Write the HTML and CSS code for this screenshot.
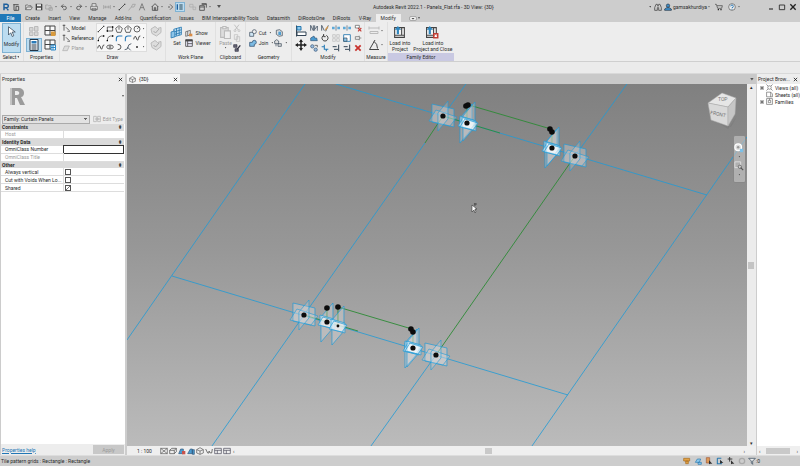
FILE: index.html
```html
<!DOCTYPE html>
<html lang="en">
<head>
  <meta charset="UTF-8" />
  <meta name="viewport" content="width=device-width, initial-scale=1.0" />
  <title>Autodesk Revit 2022.1 - Panels_Flat.rfa</title>
  <link rel="stylesheet" href="styles.css">
</head>
<body>
  <!-- icon sprite -->
  <svg class="sprite" aria-hidden="true">
    <symbol id="i-logo" viewBox="0 0 12 12"><path d="M3 11V2h4a2.2 2.2 0 0 1 0 5H3M6.500 7l3 4" fill="none" stroke="#1e5f9c" stroke-width="2.2"/></symbol>
    <symbol id="i-doc" viewBox="0 0 12 12"><path d="M2 2.500h8M3 2v9h3V5h4v6H6" fill="none" stroke="#444" stroke-width="1.3"/></symbol>
    <symbol id="i-open" viewBox="0 0 12 12"><path d="M1 10V3h3l1 1h4v2M1 10l2-4h8l-2 4z" fill="#ddd" stroke="#555"/></symbol>
    <symbol id="i-save" viewBox="0 0 12 12"><path d="M1 1h9l1 1v9H1z" fill="#444"/><path d="M3 2h6v3H3zM3 7h6v3H3z" fill="#eee"/></symbol>
    <symbol id="i-sync" viewBox="0 0 12 12"><path d="M1 9V3h3l1 1h4v5z M6 7h5v4H6z" fill="#ccc" stroke="#999"/></symbol>
    <symbol id="i-undo" viewBox="0 0 12 12"><path d="M5 2L2 5l3 3M2 5h5a2.5 2.5 0 0 1 0 5H5" fill="none" stroke="#555" stroke-width="1.3"/></symbol>
    <symbol id="i-redo" viewBox="0 0 12 12"><path d="M7 2l3 3-3 3M10 5H5a2.5 2.5 0 0 0 0 5h2" fill="none" stroke="#555" stroke-width="1.3"/></symbol>
    <symbol id="i-print" viewBox="0 0 12 12"><path d="M3 5V1h6v4M1 5h10v5H1zM3 8h6v3H3z" fill="#e4e4e4" stroke="#555"/></symbol>
    <symbol id="i-dim" viewBox="0 0 12 12"><path d="M1 3v6M11 3v6M1 6h10M4 4v4M8 4v4" fill="none" stroke="#999"/></symbol>
    <symbol id="i-line" viewBox="0 0 12 12"><path d="M2 10l8-8" stroke="#444" stroke-width="1.3"/><path d="M1 9h2v2H1zM9 1h2v2H9z" fill="#444"/></symbol>
    <symbol id="i-tag" viewBox="0 0 12 12"><path d="M1 11l4-5M5 6l2-4h4L9 6z" fill="none" stroke="#999"/></symbol>
    <symbol id="i-a" viewBox="0 0 12 12"><path d="M2 11L6 1l4 10M4 7h4" fill="none" stroke="#777" stroke-width="1.4"/></symbol>
    <symbol id="i-home" viewBox="0 0 12 12"><path d="M1 6l5-5 5 5M2 5v6h8V5M5 11V7h2v4" fill="none" stroke="#444" stroke-width="1.2"/></symbol>
    <symbol id="i-section" viewBox="0 0 12 12"><path d="M3 6h3M6 2l4 4-4 4" fill="none" stroke="#555" stroke-width="1.3"/></symbol>
    <symbol id="i-thin" viewBox="0 0 12 12"><path d="M2 2v8" stroke="#1e5f9c" stroke-width="2"/><path d="M5 3h5M5 6h5M5 9h5" stroke="#245" stroke-width="1.5"/></symbol>
    <symbol id="i-inactive" viewBox="0 0 12 12"><path d="M1 2h5v4H1zM6 6h4v4H6z" fill="none" stroke="#aaa"/></symbol>
    <symbol id="i-windows" viewBox="0 0 12 12"><path d="M4 1h7v6M1 4h7v7H1zM1 6h7M4 2h7" fill="none" stroke="#444" stroke-width="1.2"/></symbol>
    <symbol id="i-binoculars" viewBox="0 0 12 12"><path d="M3 2h2l1 3 1-3h2l2 5v4H7V7H5v4H1V7z" fill="none" stroke="#555" stroke-width="1.3"/></symbol>
    <symbol id="i-user" viewBox="0 0 12 12"><circle cx="6" cy="4" r="2.5" fill="#3f8fc9" stroke="#234"/><path d="M1 11V9l3-2h4l3 2v2z" fill="#3f8fc9" stroke="#234"/></symbol>
    <symbol id="i-cart" viewBox="0 0 12 12"><path d="M0 2h2l2 6h6l1-4H3" fill="none" stroke="#555" stroke-width="1.2"/><circle cx="5" cy="10" r="1"/><circle cx="9" cy="10" r="1"/></symbol>
    <symbol id="i-help" viewBox="0 0 12 12"><circle cx="6" cy="6" r="5" fill="#eee" stroke="#555"/><path d="M4 5a2 2 0 1 1 2 2V8M6 9v1" fill="none" stroke="#1e6fb0" stroke-width="1.3"/></symbol>
    <symbol id="i-close" viewBox="0 0 12 12"><path d="M2 2l8 8M10 2l-8 8" stroke="#222" stroke-width="2"/></symbol>
    <symbol id="i-min" viewBox="0 0 12 12"><path d="M3 9h6" stroke="#222" stroke-width="1.6"/></symbol>
    <symbol id="i-max" viewBox="0 0 12 12"><path d="M2 3h8v7H2z" fill="none" stroke="#333" stroke-width="1.4"/></symbol>

    <symbol id="i-cursor" viewBox="0 0 12 16"><path d="M2 1v11l3-3 2 5 2-1-2-5h4z" fill="#fff" stroke="#345"/></symbol>
    <symbol id="i-types" viewBox="0 0 24 24"><path d="M3 5h7v7H3zM13 3h7v9h-7zM3 14h7v7H3zM13 14h7v7h-7z" fill="#d6d6d6" stroke="#bbb" stroke-width="2"/></symbol>
    <symbol id="i-family" viewBox="0 0 24 24"><path d="M2 2h20v18H2zM2 11h20M12 2v18" fill="#fafafa" stroke="#444" stroke-width="2"/><path d="M14 13h9v9h-9z" fill="#d99a3c"/></symbol>
    <symbol id="i-props" viewBox="0 0 24 24"><path d="M4 1h16v22H4z" fill="#fff" stroke="#234" stroke-width="2"/><path d="M7 4h10v5H7z" fill="#2a7ab8"/><path d="M7 12h10M7 16h10M7 20h10" stroke="#234" stroke-width="2"/></symbol>
    <symbol id="i-famtypes" viewBox="0 0 24 24"><path d="M2 2h20v18H2zM2 11h20M12 2v18" fill="#fafafa" stroke="#444" stroke-width="2"/><path d="M14 12h9v10h-9zM14 17h9M18 12v10" fill="#fff" stroke="#2a88c8" stroke-width="2"/></symbol>
    <symbol id="i-model" viewBox="0 0 12 12"><path d="M3 1v9M1 2h4M6 5l5 5" fill="none" stroke="#444" stroke-width="1.2"/><path d="M8 11h4" stroke="#444"/></symbol>
    <symbol id="i-plane" viewBox="0 0 12 12"><path d="M1 10l3-7h7l-3 7z" fill="#ddd" stroke="#aaa"/></symbol>
    <symbol id="i-rect" viewBox="0 0 12 12"><path d="M2 3h8v6H2z" fill="none" stroke="#444" stroke-width="1.2"/><path d="M1 8h2v2H1zM9 2h2v2H9z"/></symbol>
    <symbol id="i-poly" viewBox="0 0 12 12"><path d="M6 1l5 4-2 6H3L1 5zM6 3v4" fill="none" stroke="#444" stroke-width="1.2"/></symbol>
    <symbol id="i-circ" viewBox="0 0 12 12"><circle cx="6" cy="6" r="4.5" fill="none" stroke="#444" stroke-width="1.2"/><path d="M6 6l3-3" stroke="#444"/></symbol>
    <symbol id="i-arc" viewBox="0 0 12 12"><path d="M2 10Q2 2 10 3" fill="none" stroke="#555" stroke-width="1.2"/><path d="M1 9h2v2H1zM9 2h2v2H9z"/></symbol>
    <symbol id="i-arcb" viewBox="0 0 12 12"><path d="M2 11V7q0-4 4-4h5" fill="none" stroke="#2a7ab8" stroke-width="1.6"/></symbol>
    <symbol id="i-spline" viewBox="0 0 12 12"><path d="M1 8q2-8 4-2t3 1 3-4" fill="none" stroke="#333" stroke-width="1.3"/></symbol>
    <symbol id="i-ellipse" viewBox="0 0 12 12"><ellipse cx="6" cy="6" rx="5" ry="3" fill="none" stroke="#444" stroke-width="1.2"/><path d="M6 3v6M4 6h4" stroke="#444"/></symbol>
    <symbol id="i-half" viewBox="0 0 12 12"><path d="M4 2q5 0 5 4t-5 4" fill="none" stroke="#444" stroke-width="1.3"/></symbol>
    <symbol id="i-pick" viewBox="0 0 12 12"><path d="M1 10q5 0 5-4t5-5M5 6l5 5" fill="none" stroke="#345" stroke-width="1.2"/></symbol>
    <symbol id="i-point" viewBox="0 0 12 12"><circle cx="6" cy="6" r="1.5" fill="#333"/></symbol>
    <symbol id="i-face" viewBox="0 0 24 24"><path d="M2 8l8-5 5 4 7-2v10l-9 7-9-5z" fill="#ddd" stroke="#bbb" stroke-width="2"/><path d="M7 12l4 4 7-8" fill="none" stroke="#aaa" stroke-width="2"/></symbol>
    <symbol id="i-set" viewBox="0 0 24 24"><path d="M7 6l14-4v14L7 20zM12 4v14M17 3v14M7 11l14-4M7 16l14-4" fill="#bfe0f4" stroke="#2678b0" stroke-width="1.5"/><path d="M2 11l7-2v11l-7 2z" fill="#8cc4e8" stroke="#2678b0" stroke-width="1.5"/></symbol>
    <symbol id="i-show" viewBox="0 0 12 12"><path d="M1 4l7-2v7l-7 2zM4 3v7" fill="#e0e0e0" stroke="#555"/><path d="M6 7h5v4H6z" fill="#d98b45"/></symbol>
    <symbol id="i-viewer" viewBox="0 0 12 12"><path d="M1 1h10v10H1zM1 3h10M4 3v8M4 7h7" fill="#eef" stroke="#444" stroke-width="1.2"/><path d="M1 1h10v2H1z" fill="#444"/></symbol>
    <symbol id="i-paste" viewBox="0 0 24 24"><path d="M3 3h14v18H3z" fill="#ddd" stroke="#bbb" stroke-width="2"/><path d="M7 1h6v4H7zM10 9h11v14H10z" fill="#eee" stroke="#bbb" stroke-width="2"/></symbol>
    <symbol id="i-cutclip" viewBox="0 0 12 12"><path d="M2 1l6 8M9 1L3 9" stroke="#bbb" stroke-width="1.3"/><circle cx="3" cy="10" r="1.5" fill="none" stroke="#bbb"/><circle cx="9" cy="10" r="1.5" fill="none" stroke="#bbb"/></symbol>
    <symbol id="i-copyclip" viewBox="0 0 12 12"><path d="M2 1h5v7H2zM5 4h5v7H5z" fill="#eee" stroke="#bbb"/></symbol>
    <symbol id="i-match" viewBox="0 0 12 12"><path d="M1 1h5v4H1zM3 7h5v4H3z" fill="#667" stroke="#334"/><path d="M6 8l5-6" stroke="#334" stroke-width="2"/></symbol>
    <symbol id="i-cutgeo" viewBox="0 0 12 12"><path d="M1 5h6v6H1z" fill="#cfe6f5" stroke="#345"/><circle cx="8" cy="4" r="3" fill="#eee" stroke="#345"/></symbol>
    <symbol id="i-joingeo" viewBox="0 0 12 12"><path d="M1 5h4a3 3 0 1 1 3 3v3H1z" fill="#7dbbe3" stroke="#246"/></symbol>
    <symbol id="i-cope" viewBox="0 0 12 12"><path d="M2 2l5-1 4 3v6l-5 1-4-3z" fill="#ddd" stroke="#345"/><path d="M5 4h4v5H5z" fill="#4f9fd2"/></symbol>
    <symbol id="i-split" viewBox="0 0 12 12"><path d="M1 3l3-2 3 2v4H1zM6 7h5v4H6zM3 7v4" fill="#ddd" stroke="#345"/></symbol>
    <symbol id="i-align" viewBox="0 0 24 24"><path d="M3 1v22" stroke="#345" stroke-width="2"/><path d="M4 3h8v7H4z" fill="#8cc8ec" stroke="#2678b0" stroke-width="2"/><path d="M4 14h18v7H4z" fill="#fff" stroke="#345" stroke-width="2"/></symbol>
    <symbol id="i-move" viewBox="0 0 24 24"><path d="M12 3v18M3 12h18" stroke="#222" stroke-width="3"/><path d="M12 0l4 6H8zM12 24l4-6H8zM0 12l6-4v8zM24 12l-6-4v8z" fill="#222"/></symbol>
    <symbol id="i-mirror" viewBox="0 0 12 12"><path d="M1 10V2l4 8V2M7 10V2M11 10V3L7 8" fill="none" stroke="#456" stroke-width="1.3"/></symbol>
    <symbol id="i-mirrord" viewBox="0 0 12 12"><path d="M1 10V2l4 8M7 11l4-9" fill="none" stroke="#456" stroke-width="1.3"/><path d="M6 8l4-5 1 2-4 5z" fill="#d0964c"/></symbol>
    <symbol id="i-splitel" viewBox="0 0 12 12"><path d="M0 4h4v4H0zM8 4h4v4H8z" fill="#5da9d8"/><path d="M6 2v8" stroke="#456"/></symbol>
    <symbol id="i-unpin" viewBox="0 0 12 12"><path d="M2 2h6v4H2z" fill="#fff" stroke="#555"/><path d="M6 6l5 5M11 6l-5 5" stroke="#c33b35" stroke-width="1.6"/></symbol>
    <symbol id="i-offset" viewBox="0 0 12 12"><path d="M1 10V6l5-3 1 3h3l1 4z" fill="#4a9bd0" stroke="#357"/></symbol>
    <symbol id="i-rotate" viewBox="0 0 12 12"><path d="M8 2a4.5 4.5 0 1 1-4 0M4 0v4h3" fill="none" stroke="#333" stroke-width="1.4"/></symbol>
    <symbol id="i-array" viewBox="0 0 12 12"><path d="M1 1h4v4H1zM7 1h4v4H7zM1 7h4v4H1zM7 7h4v4H7z" fill="none" stroke="#bbb"/></symbol>
    <symbol id="i-scale" viewBox="0 0 12 12"><path d="M1 1h10v10H1z" fill="#fff" stroke="#2678b0" stroke-width="1.3"/><path d="M1 6h5v5H1z" fill="#8cc8ec" stroke="#345"/></symbol>
    <symbol id="i-pin" viewBox="0 0 12 12"><path d="M2 4h4l2-1v6L6 8H2zM8 6h3" fill="none" stroke="#777" stroke-width="1.2"/></symbol>
    <symbol id="i-copy" viewBox="0 0 12 12"><circle cx="3.5" cy="3.5" r="2.5" fill="#9bd" stroke="#357"/><circle cx="8.5" cy="8.5" r="2.5" fill="#9bd" stroke="#357"/><path d="M7 2h4v3" fill="none" stroke="#333"/></symbol>
    <symbol id="i-trim" viewBox="0 0 12 12"><path d="M1 4h4v4h6M5 1v3M8 8v3" fill="none" stroke="#267ab4" stroke-width="1.6"/></symbol>
    <symbol id="i-extend" viewBox="0 0 12 12"><path d="M10 1v10M1 4h6M3 8h6" fill="none" stroke="#345" stroke-width="1.5"/></symbol>
    <symbol id="i-delete" viewBox="0 0 12 12"><path d="M2 2l8 8M10 2l-8 8" stroke="#c8322d" stroke-width="2.6"/></symbol>
    <symbol id="i-measure" viewBox="0 0 24 24"><path d="M2 6h20M2 3v6M22 3v6M4 13h16v4H4z" fill="none" stroke="#bbb" stroke-width="2"/></symbol>
    <symbol id="i-angle" viewBox="0 0 24 24"><path d="M14 2L3 21h19M12 5q7 4 7 14" fill="none" stroke="#444" stroke-width="2"/></symbol>
    <symbol id="i-load" viewBox="0 0 24 24"><path d="M3 3h18v18H3zM3 17h18M16 3v14" fill="#f5f5f5" stroke="#444" stroke-width="2"/><path d="M9 0l6 7h-4v8H7V7H3z" fill="#2f86bd"/></symbol>
    <symbol id="i-loadclose" viewBox="0 0 24 24"><path d="M1 3h18v18H1zM1 17h18M14 3v14" fill="#f5f5f5" stroke="#444" stroke-width="2"/><path d="M7 0l6 7H9v8H5V7H1z" fill="#2f86bd"/><path d="M13 13h10v10H13z" fill="#c0392f"/><path d="M16 16l4 4M20 16l-4 4" stroke="#fff" stroke-width="2"/></symbol>
    <symbol id="i-panelbtn" viewBox="0 0 16 10"><rect x="1" y="1" width="14" height="8" rx="3" fill="#eee" stroke="#777"/><path d="M5 4h6L8 7z" fill="#444"/></symbol>

    <symbol id="i-edittype" viewBox="0 0 12 12"><path d="M1 2h4v8H1zM7 2h4v8H7zM7 6h4M3 6h6" fill="none" stroke="#aaa"/></symbol>
    <symbol id="i-cube" viewBox="0 0 12 12"><path d="M6 1l5 3v5l-5 2-5-2V4zM1 4l5 2 5-2M6 6v5" fill="#eee" stroke="#555"/></symbol>
    <symbol id="i-views" viewBox="0 0 12 12"><circle cx="6" cy="6" r="3" fill="none" stroke="#555"/><path d="M1 1l2 2M11 1L9 3M1 11l2-2M11 11L9 9" stroke="#444" stroke-width="1.3"/></symbol>
    <symbol id="i-sheets" viewBox="0 0 12 12"><path d="M1 2h7l3 3v5H1zM8 2v8" fill="#fff" stroke="#555"/></symbol>
    <symbol id="i-fams" viewBox="0 0 12 12"><path d="M1 1h10v10H1zM4 4h4v4H4zM6 1v3" fill="#fff" stroke="#555"/></symbol>
    <symbol id="i-detail" viewBox="0 0 12 12"><path d="M1 2h10v8H1zM1 2l10 8M11 2L1 10" fill="none" stroke="#555"/></symbol>
    <symbol id="i-style" viewBox="0 0 12 12"><path d="M1 5l3-3h7v5l-3 3H1zM1 5h7v5M8 5l3-3" fill="#eee" stroke="#444"/></symbol>
    <symbol id="i-sun" viewBox="0 0 12 12"><path d="M1 10l3-7h4v7z" fill="#4a9bd0" stroke="#357"/><path d="M6 6h5v5H6z" fill="#c9534b"/></symbol>
    <symbol id="i-shadow" viewBox="0 0 12 12"><path d="M1 10l4-7h3v7zM8 4h3v7H8z" fill="#4a9bd0" stroke="#357"/></symbol>
    <symbol id="i-glasses" viewBox="0 0 12 12"><path d="M1 3l3 6h2V6l2 3h2l1-6" fill="none" stroke="#555" stroke-width="1.2"/></symbol>
    <symbol id="i-crop" viewBox="0 0 12 12"><path d="M1 2h10v8H1zM1 5h10M5 5v5" fill="none" stroke="#445"/></symbol>
    <symbol id="i-worksets" viewBox="0 0 12 12"><path d="M1 2h9v4H1zM4 6h4v4H4z" fill="#e3a245" stroke="#a66b20"/></symbol>
    <symbol id="i-links" viewBox="0 0 12 12"><path d="M2 8l3-5h5L8 8zM6 8h5v3H6z" fill="#8cc8ec" stroke="#2678b0"/></symbol>
    <symbol id="i-selpin" viewBox="0 0 12 12"><path d="M2 1h5v8H2z" fill="#dd9a55" stroke="#a5593a"/><path d="M6 5l5 5H8l-2 1z" fill="#333"/></symbol>
    <symbol id="i-selface" viewBox="0 0 12 12"><path d="M2 2h6M2 2v8h6V6" fill="none" stroke="#2678b0" stroke-width="1.6"/><path d="M6 4l5 5H8l-2 1z" fill="#333"/></symbol>
    <symbol id="i-drag" viewBox="0 0 12 12"><path d="M4 0v7M1 3h7" stroke="#333" stroke-width="1.4"/><path d="M6 5l5 5H8l-2 1z" fill="#333"/></symbol>
    <symbol id="i-ring" viewBox="0 0 12 12"><circle cx="6" cy="6" r="4" fill="none" stroke="#aaa" stroke-width="2"/></symbol>
    <symbol id="i-filter" viewBox="0 0 12 12"><path d="M1 2h10L7 6v5L5 9V6z" fill="#eee" stroke="#456" stroke-width="1.2"/></symbol>
  </svg>

  <header class="titlebar">
    <div class="qat">
      <button class="tool" aria-label="Revit"><svg><use href="#i-logo"/></svg></button>
      <button class="tool group-end" aria-label="Home"><svg><use href="#i-doc"/></svg></button>
      <button class="tool" aria-label="Open"><svg><use href="#i-open"/></svg></button>
      <button class="tool" aria-label="Save"><svg><use href="#i-save"/></svg></button>
      <button class="tool" aria-label="Synchronize"><svg><use href="#i-sync"/></svg></button><i class="caret"></i>
      <button class="tool" aria-label="Undo"><svg><use href="#i-undo"/></svg></button><i class="caret"></i>
      <button class="tool" aria-label="Redo"><svg><use href="#i-redo"/></svg></button><i class="caret"></i>
      <button class="tool group-end" aria-label="Print"><svg><use href="#i-print"/></svg></button>
      <button class="tool" aria-label="Dimension"><svg><use href="#i-dim"/></svg></button><i class="caret"></i>
      <button class="tool" aria-label="Line"><svg><use href="#i-line"/></svg></button>
      <button class="tool" aria-label="Tag"><svg><use href="#i-tag"/></svg></button>
      <button class="tool group-end" aria-label="Text"><svg><use href="#i-a"/></svg></button>
      <button class="tool" aria-label="3D view"><svg><use href="#i-home"/></svg></button><i class="caret"></i>
      <button class="tool" aria-label="Section"><svg><use href="#i-section"/></svg></button>
      <button class="tool active group-end" aria-label="Thin lines"><svg><use href="#i-thin"/></svg></button>
      <button class="tool" aria-label="Close inactive views"><svg><use href="#i-inactive"/></svg></button>
      <button class="tool" aria-label="Switch windows"><svg><use href="#i-windows"/></svg></button><i class="caret"></i>
      <i class="caret big"></i>
    </div>
    <h1>Autodesk Revit 2022.1 - Panels_Flat.rfa - 3D View: {3D}</h1>
    <div class="account">
      <i class="caret left"></i>
      <button class="tool" aria-label="Search"><svg><use href="#i-binoculars"/></svg></button>
      <button class="user"><svg><use href="#i-user"/></svg>gamsakhurdiya</button><i class="caret"></i>
      <button class="tool group-end" aria-label="App store"><svg><use href="#i-cart"/></svg></button>
      <button class="tool" aria-label="Help"><svg><use href="#i-help"/></svg></button><i class="caret"></i>
    </div>
    <div class="window-btns">
      <button class="tool" aria-label="Minimize"><svg><use href="#i-min"/></svg></button>
      <button class="tool" aria-label="Maximize"><svg><use href="#i-max"/></svg></button>
      <button class="tool" aria-label="Close"><svg><use href="#i-close"/></svg></button>
    </div>
  </header>

  <nav class="tabs">
    <div class="tab-list">
      <a href="#" class="file">File</a>
      <a href="#">Create</a>
      <a href="#">Insert</a>
      <a href="#">View</a>
      <a href="#">Manage</a>
      <a href="#">Add-Ins</a>
      <a href="#">Quantification</a>
      <a href="#">Issues</a>
      <a href="#">BIM Interoperability Tools</a>
      <a href="#">Datasmith</a>
      <a href="#">DiRootsOne</a>
      <a href="#">DiRoots</a>
      <a href="#">V-Ray</a>
      <a href="#" class="current">Modify</a>
    </div>
    <button class="panel-toggle" aria-label="Minimize ribbon"><svg><use href="#i-panelbtn"/></svg></button><i class="caret"></i>
  </nav>

  <div class="ribbon">
    <section class="panel p-select">
      <div class="tools"><button class="big-btn active"><svg><use href="#i-cursor"/></svg>Modify</button></div>
      <h2>Select <i class="caret"></i></h2>
    </section>
    <section class="panel p-props">
      <div class="tools two-grid">
        <button class="mid" aria-label="Family category"><svg><use href="#i-types"/></svg></button>
        <button class="mid" aria-label="Family"><svg><use href="#i-family"/></svg></button>
        <button class="mid active" aria-label="Properties"><svg><use href="#i-props"/></svg></button>
        <button class="mid" aria-label="Family types"><svg><use href="#i-famtypes"/></svg></button>
      </div>
      <h2>Properties</h2>
    </section>
    <section class="panel p-draw">
      <div class="tools">
        <div class="rows wide">
          <button class="row-btn"><svg><use href="#i-model"/></svg>Model</button>
          <button class="row-btn"><svg><use href="#i-model"/></svg>Reference</button>
          <button class="row-btn" disabled><svg><use href="#i-plane"/></svg>Plane</button>
        </div>
        <div class="gallery">
          <button class="tool" aria-label="Line"><svg><use href="#i-line"/></svg></button>
          <button class="tool" aria-label="Rectangle"><svg><use href="#i-rect"/></svg></button>
          <button class="tool" aria-label="Inscribed polygon"><svg><use href="#i-poly"/></svg></button>
          <button class="tool" aria-label="Circumscribed polygon"><svg><use href="#i-poly"/></svg></button>
          <button class="tool" aria-label="Circle"><svg><use href="#i-circ"/></svg></button>
          <i class="caret"></i>
          <button class="tool" aria-label="Arc"><svg><use href="#i-arc"/></svg></button>
          <button class="tool" aria-label="Center arc"><svg><use href="#i-arc"/></svg></button>
          <button class="tool" aria-label="Tangent arc"><svg><use href="#i-arcb"/></svg></button>
          <button class="tool" aria-label="Fillet arc"><svg><use href="#i-arcb"/></svg></button>
          <button class="tool" aria-label="Spline"><svg><use href="#i-spline"/></svg></button>
          <i class="caret"></i>
          <button class="tool" aria-label="Spline through points"><svg><use href="#i-spline"/></svg></button>
          <button class="tool" aria-label="Ellipse"><svg><use href="#i-ellipse"/></svg></button>
          <button class="tool" aria-label="Partial ellipse"><svg><use href="#i-half"/></svg></button>
          <button class="tool" aria-label="Pick lines"><svg><use href="#i-pick"/></svg></button>
          <button class="tool" aria-label="Point"><svg><use href="#i-point"/></svg></button>
          <i class="caret"></i>
        </div>
        <div class="stack">
          <button class="mid" aria-label="Draw on face"><svg><use href="#i-face"/></svg></button>
          <button class="mid" aria-label="Draw on work plane"><svg><use href="#i-face"/></svg></button>
        </div>
      </div>
      <h2>Draw</h2>
    </section>
    <section class="panel p-work">
      <div class="tools">
        <button class="big-btn"><svg><use href="#i-set"/></svg>Set</button>
        <div class="rows">
          <button class="row-btn"><svg><use href="#i-show"/></svg>Show</button>
          <button class="row-btn"><svg><use href="#i-viewer"/></svg>Viewer</button>
        </div>
      </div>
      <h2>Work Plane</h2>
    </section>
    <section class="panel p-clip">
      <div class="tools">
        <button class="big-btn" disabled><svg><use href="#i-paste"/></svg>Paste<i class="caret"></i></button>
        <div class="rows">
          <button class="tool" aria-label="Cut"><svg><use href="#i-cutclip"/></svg></button>
          <button class="tool" aria-label="Copy"><svg><use href="#i-copyclip"/></svg></button>
          <button class="tool" aria-label="Match type"><svg><use href="#i-match"/></svg></button>
        </div>
      </div>
      <h2>Clipboard</h2>
    </section>
    <section class="panel p-geo">
      <div class="tools">
        <div class="rows">
          <button class="row-btn"><svg><use href="#i-cutgeo"/></svg>Cut <i class="caret"></i></button>
          <button class="row-btn"><svg><use href="#i-joingeo"/></svg>Join <i class="caret"></i></button>
        </div>
        <div class="rows">
          <button class="tool" aria-label="Cope"><svg><use href="#i-cope"/></svg></button>
          <button class="row-btn" aria-label="Split face"><svg><use href="#i-split"/></svg><i class="caret"></i></button>
        </div>
      </div>
      <h2>Geometry</h2>
    </section>
    <section class="panel p-modify">
      <div class="tools">
        <div class="stack">
          <button class="mid" aria-label="Align"><svg><use href="#i-align"/></svg></button>
          <button class="mid" aria-label="Move"><svg><use href="#i-move"/></svg></button>
        </div>
        <div class="icon-grid">
          <button class="tool" aria-label="Mirror pick axis"><svg><use href="#i-mirror"/></svg></button>
          <button class="tool" aria-label="Mirror draw axis"><svg><use href="#i-mirrord"/></svg></button>
          <button class="tool" aria-label="Split element"><svg><use href="#i-splitel"/></svg></button>
          <button class="tool" aria-label="Split with gap"><svg><use href="#i-splitel"/></svg></button>
          <button class="tool" aria-label="Unpin"><svg><use href="#i-unpin"/></svg></button>
          <button class="tool" aria-label="Offset"><svg><use href="#i-offset"/></svg></button>
          <button class="tool" aria-label="Rotate"><svg><use href="#i-rotate"/></svg></button>
          <button class="tool" aria-label="Array"><svg><use href="#i-array"/></svg></button>
          <button class="tool" aria-label="Scale"><svg><use href="#i-scale"/></svg></button>
          <button class="tool" aria-label="Pin"><svg><use href="#i-pin"/></svg></button>
          <button class="tool" aria-label="Copy"><svg><use href="#i-copy"/></svg></button>
          <button class="tool" aria-label="Trim to corner"><svg><use href="#i-trim"/></svg></button>
          <button class="tool" aria-label="Trim single"><svg><use href="#i-extend"/></svg></button>
          <button class="tool" aria-label="Trim multiple"><svg><use href="#i-extend"/></svg></button>
          <button class="tool" aria-label="Delete"><svg><use href="#i-delete"/></svg></button>
        </div>
      </div>
      <h2>Modify</h2>
    </section>
    <section class="panel p-measure">
      <div class="tools stack">
        <button class="mid with-caret" aria-label="Measure"><svg><use href="#i-measure"/></svg><i class="caret"></i></button>
        <button class="mid with-caret" aria-label="Dimension"><svg><use href="#i-angle"/></svg><i class="caret"></i></button>
      </div>
      <h2>Measure</h2>
    </section>
    <section class="panel p-family">
      <div class="tools">
        <button class="big-btn"><svg><use href="#i-load"/></svg>Load into<br>Project</button>
        <button class="big-btn"><svg><use href="#i-loadclose"/></svg>Load into<br>Project and Close</button>
      </div>
      <h2>Family Editor</h2>
    </section>
  </div>
  <div class="options-bar"></div>

  <main class="workspace">
    <aside class="properties">
      <div class="pane-title"><h2>Properties</h2><button class="x" aria-label="Close"><svg><use href="#i-close"/></svg></button></div>
      <div class="type-preview">
        <svg class="big-r" viewBox="0 0 16 18"><path d="M1 1h8c4 0 6 2 6 5 0 2-1 4-3 4l4 8h-5L8 11H6v7H1zM6 4v4h2c3 0 3-4 0-4z" fill="#9b9b9b" fill-rule="evenodd"/><path d="M1 1h2v17H1z" fill="#c4c4c4"/></svg>
        <i class="caret"></i>
      </div>
      <div class="type-row">
        <select aria-label="Family type"><option>Family: Curtain Panels</option></select>
        <button class="row-btn" disabled><svg><use href="#i-edittype"/></svg>Edit Type</button>
      </div>
      <table>
        <tbody>
          <tr class="head"><th colspan="2">Constraints<span>⇞</span></th></tr>
          <tr class="off"><td>Host</td><td></td></tr>
          <tr class="head"><th colspan="2">Identity Data<span>⇞</span></th></tr>
          <tr><td><label for="omni">OmniClass Number</label></td><td class="editing"><input type="text" id="omni"></td></tr>
          <tr class="off"><td>OmniClass Title</td><td></td></tr>
          <tr class="head"><th colspan="2">Other<span>⇞</span></th></tr>
          <tr><td><label for="vertical">Always vertical</label></td><td><input type="checkbox" id="vertical"></td></tr>
          <tr><td><label for="voids">Cut with Voids When Lo...</label></td><td><input type="checkbox" id="voids"></td></tr>
          <tr><td><label for="shared">Shared</label></td><td><input type="checkbox" id="shared" checked></td></tr>
        </tbody>
      </table>
      <div class="pane-foot"><a href="#">Properties help</a><button disabled>Apply</button></div>
    </aside>

    <section class="view">
      <div class="view-tabs">
        <div class="view-tab"><svg><use href="#i-cube"/></svg><span>{3D}</span><button class="x" aria-label="Close view"><svg><use href="#i-close"/></svg></button></div>
        <i class="caret big"></i>
      </div>
      <div class="canvas-row">
        <div class="canvas">
          <svg class="model" viewBox="127 84 620 362" preserveAspectRatio="xMidYMid slice">
            <defs>
              <g id="level" class="plane">
                <path d="M-11-12L11-7V11L-11 6Z"/>
                <path class="thin" d="M-14 5L-7-6L14 1L7 10Z"/>
                <path class="thin" d="M-5-3L5-15V3L-5 15Z"/>
              </g>
              <g id="host" class="plane bright">
                <path d="M-7-7L7-3V7L-7 3Z"/>
                <path d="M-9 3L-4-5L9-1L4 6Z"/>
              </g>
              <path id="fin" class="plane" d="M-6 19V-6L6-20V5Z"/>
            </defs>
            <g class="grid-lines">
              <path d="M305 84L127 340M466 84L443 116M425 143L212 446M627 84L575 156M436 355L371 446M747 137L532 446"/>
              <path d="M336 84L707 195M172 276L568 395"/>
            </g>
            <g class="ref-lines">
              <path d="M575 156L436 355M443 116L425 143M443 116L500 133M304 315L358 331"/>
              <path d="M469 105L551 129M338 307L412 329"/>
              <path d="M467 105V123M552 131V148M327 308V322M338 307V326M413 331V348"/>
            </g>
            <use href="#level" x="443" y="116"/>
            <use href="#level" x="575" y="156"/>
            <use href="#level" x="304" y="315"/>
            <use href="#level" x="436" y="355"/>
            <use href="#fin" x="466" y="124"/>
            <use href="#fin" x="469" y="122"/>
            <use href="#host" x="467" y="123"/>
            <use href="#host" x="469" y="124"/>
            <use href="#fin" x="551" y="149"/>
            <use href="#fin" x="553" y="147"/>
            <use href="#host" x="551" y="148"/>
            <use href="#host" x="553" y="149"/>
            <use href="#fin" x="327" y="323"/>
            <use href="#host" x="327" y="322"/>
            <use href="#fin" x="338" y="326"/>
            <use href="#host" x="338" y="326"/>
            <use href="#fin" x="411" y="349"/>
            <use href="#fin" x="413" y="348"/>
            <use href="#host" x="412" y="348"/>
            <use href="#host" x="414" y="348"/>
            <g class="points">
              <circle cx="443" cy="116" r="2.6"/><circle cx="467" cy="123" r="2.6"/><circle cx="552" cy="148" r="2.6"/><circle cx="575" cy="156" r="2.6"/>
              <circle cx="466" cy="106" r="2.8"/><circle cx="468" cy="105" r="2.8"/><circle cx="550" cy="129" r="2.8"/><circle cx="552" cy="132" r="2.8"/>
              <circle cx="304" cy="315" r="2.6"/><circle cx="327" cy="322" r="2.6"/><circle cx="338" cy="326" r="1.4"/><circle cx="327" cy="308" r="2.8"/>
              <circle cx="338" cy="307" r="2.8"/><circle cx="411" cy="329" r="2.8"/><circle cx="413" cy="332" r="2.8"/><circle cx="413" cy="348" r="2.6"/><circle cx="436" cy="355" r="2.6"/>
            </g>
            <path d="M472 205v7l2-2 1 3 1-1-1-3h2z" fill="#fff" stroke="#333" stroke-width=".6"/>
            <path d="M475 203v3M474 204h3" stroke="#333" stroke-width=".7"/>
          </svg>
          <svg class="viewcube" viewBox="0 0 32 38">
            <path d="M4 26L21 37L30 24L24 35Z" fill="#777" opacity=".5"/>
            <path d="M1 11L15 1L29 6L21 15Z" fill="#e6e6e6" stroke="#aaa" stroke-width=".5"/>
            <path d="M1 11L21 15L21 34L4 28Z" fill="#d9d9d9" stroke="#aaa" stroke-width=".5"/>
            <path d="M21 15L29 6L28 22L21 34Z" fill="#c6c6c6" stroke="#aaa" stroke-width=".5"/>
            <text x="11" y="9">TOP</text>
            <text x="3" y="22" transform="rotate(12 3 22)">FRONT</text>
          </svg>
          <div class="navbar">
            <button aria-label="Steering wheel"><svg viewBox="0 0 12 12"><circle cx="5" cy="5" r="4" fill="#ddd" stroke="#fff" stroke-width="1.5"/><circle cx="5" cy="5" r="1.5" fill="#999"/><path d="M7 7h4v4H7z" fill="#7cc0e8"/></svg></button>
            <i class="caret"></i>
            <button aria-label="Zoom"><svg viewBox="0 0 12 12"><path d="M1 1h7v7H1z" fill="none" stroke="#e4e4e4"/><circle cx="7" cy="7" r="2" fill="#ccc" stroke="#666"/><path d="M8 8l3 3" stroke="#555" stroke-width="1.5"/></svg></button>
            <i class="caret"></i>
          </div>
        </div>
        <div class="vscroll"><span>▴</span><i class="thumb"></i><span>▾</span></div>
      </div>
      <div class="view-bar">
        <button class="scale">1 : 100</button>
        <button class="tool" aria-label="Detail level"><svg><use href="#i-detail"/></svg></button>
        <button class="tool" aria-label="Visual style"><svg><use href="#i-style"/></svg></button>
        <button class="tool" aria-label="Sun path"><svg><use href="#i-sun"/></svg></button>
        <button class="tool" aria-label="Shadows"><svg><use href="#i-shadow"/></svg></button>
        <button class="tool" aria-label="Lock view"><svg><use href="#i-cube"/></svg></button>
        <button class="tool" aria-label="Temporary hide"><svg><use href="#i-glasses"/></svg></button>
        <button class="tool" aria-label="Crop view"><svg><use href="#i-crop"/></svg></button>
        <button class="tool" aria-label="Reveal constraints"><svg><use href="#i-crop"/></svg></button>
        <div class="hscroll"><span>‹</span><i class="thumb"></i><span>›</span></div>
        <i class="grip"></i>
      </div>
    </section>

    <aside class="browser">
      <div class="pane-title"><h2>Project Brow...</h2><button class="x" aria-label="Close"><svg><use href="#i-close"/></svg></button></div>
      <ul>
        <li><i class="plus"></i><svg><use href="#i-views"/></svg>Views (all)</li>
        <li><i class="plus none"></i><svg><use href="#i-sheets"/></svg>Sheets (all)</li>
        <li><i class="plus"></i><svg><use href="#i-fams"/></svg>Families</li>
      </ul>
      <div class="hscroll"><span>‹</span><i class="thumb"></i><span>›</span></div>
    </aside>
  </main>

  <footer class="status">
    <p>Tile pattern grids : Rectangle : Rectangle</p>
    <div class="status-tools">
      <button class="tool" aria-label="Worksets"><svg><use href="#i-worksets"/></svg></button>
      <button class="tool" aria-label="Select links"><svg><use href="#i-links"/></svg></button>
      <button class="tool" aria-label="Select pinned"><svg><use href="#i-selpin"/></svg></button>
      <button class="tool" aria-label="Select by face"><svg><use href="#i-selface"/></svg></button>
      <button class="tool" aria-label="Drag on selection"><svg><use href="#i-drag"/></svg></button>
      <button class="tool" aria-label="Background processes"><svg><use href="#i-ring"/></svg></button>
      <button class="user"><svg><use href="#i-filter"/></svg>:0</button>
    </div>
  </footer>
</body>
</html>
```

FILE: styles.css
```css
:root {
  --chrome: #cdcdcd;
  --ribbon: #ededed;
  --text: #2b2b2b;
  --muted: #999;
  --select: #bcdcf0;
  --select-line: #7fb2d3;
  --blue: #1f9ad6;
  --green: #2d8a35;
}

* {
  margin: 0;
  padding: 0;
  box-sizing: border-box;
}

body {
  display: flex;
  flex-direction: column;
  min-height: 100vh;
  background: var(--chrome);
  color: var(--text);
  font: 5px/6px Roboto, "Liberation Sans", sans-serif;
  overflow: hidden;
}

h1, h2 {
  font-size: 5px;
  font-weight: 400;
  white-space: nowrap;
}

button, input, select {
  border: 0;
  background: none;
  color: inherit;
  font: inherit;
  white-space: nowrap;
}

button:disabled {
  color: var(--muted);
}

a {
  color: inherit;
  text-decoration: none;
}

.sprite {
  position: absolute;
  width: 0;
  height: 0;
}

/* shared bits */
.tool {
  display: flex;
  align-items: center;
  justify-content: center;
  width: 10px;
  height: 10px;
  flex: none;
}

.tool svg,
.row-btn svg,
.user svg {
  width: 8px;
  height: 8px;
  flex: none;
}

.active {
  background: var(--select);
  outline: 1px solid var(--select-line);
  outline-offset: -1px;
}

.caret {
  flex: none;
  width: 2px;
  height: 2px;
  margin: 0 1px;
  background: #555;
  clip-path: polygon(0 0, 100% 0, 50% 100%);
}

.caret.big {
  width: 4px;
  height: 3px;
  margin: 0 2px;
}

.caret.left {
  clip-path: polygon(100% 0, 100% 100%, 0 50%);
}

.row-btn,
.user {
  display: flex;
  align-items: center;
  gap: 2px;
  height: 10px;
}

.x {
  display: flex;
  width: 5px;
  height: 5px;
}

.x svg {
  width: 5px;
  height: 5px;
}

/* title bar */
.titlebar {
  display: flex;
  align-items: center;
  height: 13px;
  padding: 0 2px 0 1px;
}

.qat,
.account,
.window-btns {
  display: flex;
  align-items: center;
}

.qat {
  flex: 0 0 372px;
}

.qat .caret {
  margin-right: 2px;
}

.qat .caret.big {
  margin-left: 4px;
}

.group-end {
  margin-right: 3px;
}

.account {
  margin-left: auto;
  margin-right: 22px;
}

.account .user {
  gap: 1px;
  padding-left: 1px;
}

.account .caret {
  margin-right: 4px;
}

.account .caret.left {
  margin-right: 2px;
}

.window-btns {
  gap: 1px;
}

/* ribbon tabs */
.tabs {
  display: flex;
  align-items: center;
  height: 9px;
  padding-top: 1px;
}

.tab-list {
  display: flex;
  justify-content: space-between;
  flex: 0 0 401px;
}

.tabs a {
  padding: 1px 4px;
  white-space: nowrap;
}

.tabs .file {
  width: 21px;
  text-align: center;
  background: #1f78b8;
  color: #fff;
}

.tabs .current {
  padding: 1px 5px;
  background: var(--ribbon);
}

.panel-toggle {
  display: flex;
  margin-left: 8px;
}

.panel-toggle svg {
  width: 8px;
  height: 5px;
}

/* ribbon */
.ribbon {
  display: flex;
  height: 40px;
  background: var(--ribbon);
  border-bottom: 1px solid #cfcfcf;
}

.panel {
  display: flex;
  flex-direction: column;
  flex: none;
  border-right: 1px solid #e0e0e0;
}

.panel h2 {
  display: flex;
  align-items: center;
  justify-content: center;
  height: 8px;
}

.tools {
  flex: 1;
  display: flex;
  align-items: center;
  justify-content: center;
}

.p-select { width: 24px; }
.p-props { width: 36px; }
.p-draw { width: 106px; }
.p-work { width: 50px; }
.p-clip { width: 30px; }
.p-geo { width: 46px; }
.p-modify { width: 73px; }
.p-measure { width: 23px; }
.p-family { width: 66px; }

.p-family {
  border-right: 0;
}

.p-family h2 {
  background: #c9c9e2;
}

.big-btn {
  display: flex;
  flex-direction: column;
  align-items: center;
  justify-content: flex-start;
  gap: 1px;
  height: 30px;
  padding-top: 3px;
  line-height: 6px;
}

.big-btn svg {
  flex: none;
  width: 13px;
  height: 13px;
}

.p-select .big-btn {
  width: 19px;
}

.p-select .big-btn svg {
  height: 12px;
  margin-bottom: 2px;
}

.p-family .tools {
  gap: 3px;
}

.mid {
  display: flex;
  align-items: center;
  justify-content: center;
  width: 16px;
  height: 14px;
}

.mid svg {
  width: 12px;
  height: 12px;
}

.with-caret {
  width: 20px;
}

.two-grid {
  display: grid;
  grid-template-columns: 16px 16px;
  align-content: center;
}

.stack,
.rows {
  display: flex;
  flex-direction: column;
}

.rows.wide {
  width: 33px;
}

.p-work .tools,
.p-draw .tools {
  gap: 2px;
}

.gallery {
  display: grid;
  grid-template-columns: repeat(5, 9px) 4px;
  grid-auto-rows: 9px;
  align-items: center;
  background: #f7f7f7;
  outline: 1px solid #ddd;
}

.gallery .tool {
  width: 9px;
  height: 9px;
}

.icon-grid {
  display: grid;
  grid-template-columns: repeat(5, 11px);
  grid-auto-rows: 10px;
}

.options-bar {
  height: 12px;
  background: #ebebeb;
  border-bottom: 1px solid #d9d9d9;
}

/* workspace */
.workspace {
  flex: 1;
  display: flex;
  min-height: 0;
}

.properties {
  display: flex;
  flex-direction: column;
  flex: 0 0 125px;
  background: #fff;
  border-left: 1px solid #ccc;
}

.pane-title {
  display: flex;
  align-items: center;
  justify-content: space-between;
  height: 10px;
  padding: 0 2px 0 1px;
  background: var(--ribbon);
}

.type-preview {
  display: flex;
  align-items: center;
  justify-content: space-between;
  height: 30px;
  padding: 0 0 6px 8px;
  background: var(--ribbon);
}

.big-r {
  width: 16px;
  height: 18px;
}

.type-row {
  display: flex;
  align-items: center;
  justify-content: space-between;
  height: 10px;
  padding: 0 2px 0 1px;
  background: var(--ribbon);
}

.type-row select {
  appearance: none;
  width: 88px;
  height: 9px;
  padding: 0 1px;
  border: 1px solid #aaa;
  background:
    linear-gradient(45deg, transparent 50%, #666 50%) right 4px center / 2px 2px no-repeat,
    linear-gradient(-45deg, transparent 50%, #666 50%) right 2px center / 2px 2px no-repeat,
    #e2e2e2;
}

table {
  height: 68px;
  margin-right: 1px;
  border-collapse: collapse;
  table-layout: fixed;
}

th {
  padding: 0 2px 0 1px;
  background: #dadada;
  font-weight: 700;
  text-align: left;
}

th span {
  float: right;
}

td {
  padding: 0 1px 0 4px;
  border-bottom: 1px solid #ddd;
  white-space: nowrap;
}

td + td {
  border-left: 1px solid #ddd;
  padding: 0 1px;
}

.off td {
  color: var(--muted);
}

td.editing {
  padding: 0;
  border: 1px solid #333;
}

#omni {
  display: block;
  width: 100%;
  height: 5px;
  outline: 0;
}

input[type="checkbox"] {
  appearance: none;
  display: block;
  width: 6px;
  height: 6px;
  border: 1px solid #555;
  background: #fff;
}

input[type="checkbox"]:checked {
  background: linear-gradient(-45deg, transparent 40%, #777 40% 60%, transparent 60%);
}

.pane-foot {
  display: flex;
  align-items: center;
  justify-content: space-between;
  height: 11px;
  margin-top: auto;
  padding: 0 1px;
  background: var(--ribbon);
}

.pane-foot a {
  color: #2277b5;
  text-decoration: underline;
}

.pane-foot button {
  width: 31px;
  height: 9px;
  background: #c8c8c8;
}

/* 3D view */
.view {
  flex: 1;
  display: flex;
  flex-direction: column;
  min-width: 0;
  margin-left: 2px;
}

.view-tabs {
  display: flex;
  align-items: center;
  justify-content: space-between;
  height: 10px;
  background: #c9c9c9;
}

.view-tab {
  display: flex;
  align-items: center;
  gap: 3px;
  width: 53px;
  height: 10px;
  padding: 0 2px;
  background: #f5f5f5;
}

.view-tab > svg {
  width: 7px;
  height: 7px;
}

.view-tab .x {
  margin-left: auto;
}

.canvas-row {
  flex: 1;
  display: flex;
  min-height: 0;
}

.canvas {
  position: relative;
  flex: 1;
  min-width: 0;
  overflow: hidden;
  background: linear-gradient(#808080, #979797 45%, #bbb);
}

.model {
  position: absolute;
  width: 100%;
  height: 100%;
}

.grid-lines {
  fill: none;
  stroke: var(--blue);
  stroke-width: .8;
}

.ref-lines {
  fill: none;
  stroke: var(--green);
  stroke-width: .9;
}

.plane {
  fill: rgba(235, 235, 240, .3);
  stroke: var(--blue);
  stroke-width: .7;
}

.plane.bright {
  fill: rgba(245, 248, 250, .45);
}

.plane .thin {
  fill: rgba(235, 235, 240, .2);
  stroke-width: .6;
}

.points {
  fill: #0c0c0c;
}

.viewcube {
  position: absolute;
  top: 8px;
  right: 8px;
  width: 32px;
  height: 38px;
}

.viewcube text {
  font-size: 5px;
  fill: #777;
}

.navbar {
  position: absolute;
  top: 51px;
  right: 1px;
  display: flex;
  flex-direction: column;
  align-items: center;
  justify-content: center;
  gap: 3px;
  width: 13px;
  height: 48px;
  border: 1px solid #888;
  border-radius: 2px;
  background: rgba(200, 200, 200, .6);
}

.navbar button,
.navbar svg {
  display: block;
  width: 10px;
  height: 10px;
}

.vscroll {
  display: flex;
  flex-direction: column;
  align-items: center;
  justify-content: space-between;
  width: 9px;
  background: #ececec;
}

.vscroll .thumb {
  width: 6px;
  height: 7px;
  background: #c4c4c4;
}

.view-bar {
  display: flex;
  align-items: center;
  height: 9px;
  background: #efefef;
}

.view-bar .scale {
  width: 32px;
  padding-left: 10px;
  text-align: left;
}

.view-bar .tool {
  width: 9px;
  height: 9px;
}

.hscroll {
  flex: 1;
  display: flex;
  align-items: center;
  justify-content: space-between;
  padding: 0 2px;
  background: #efefef;
}

.hscroll .thumb {
  width: 7px;
  height: 6px;
  background: #c9c9c9;
}

.grip {
  width: 9px;
}

/* project browser */
.browser {
  display: flex;
  flex-direction: column;
  flex: 0 0 43px;
  margin-left: 1px;
  background: #fff;
}

.browser ul {
  flex: 1;
  list-style: none;
  overflow: hidden;
}

.browser li {
  display: flex;
  align-items: center;
  gap: 2px;
  height: 7px;
  padding-left: 3px;
  white-space: nowrap;
}

.browser li svg {
  width: 7px;
  height: 7px;
  flex: none;
}

.plus {
  flex: none;
  width: 4px;
  height: 4px;
  border: 1px solid #bbb;
  background: #777;
}

.plus.none {
  visibility: hidden;
}

.browser .hscroll {
  flex: 0 0 9px;
}

.browser .thumb {
  width: 24px;
}

/* status bar */
.status {
  display: flex;
  align-items: center;
  justify-content: space-between;
  height: 11px;
  padding: 0 40px 0 1px;
  border-top: 1px solid #ddd;
}

.status-tools {
  display: flex;
  align-items: center;
  gap: 1px;
}

.status .user {
  gap: 0;
}
```
